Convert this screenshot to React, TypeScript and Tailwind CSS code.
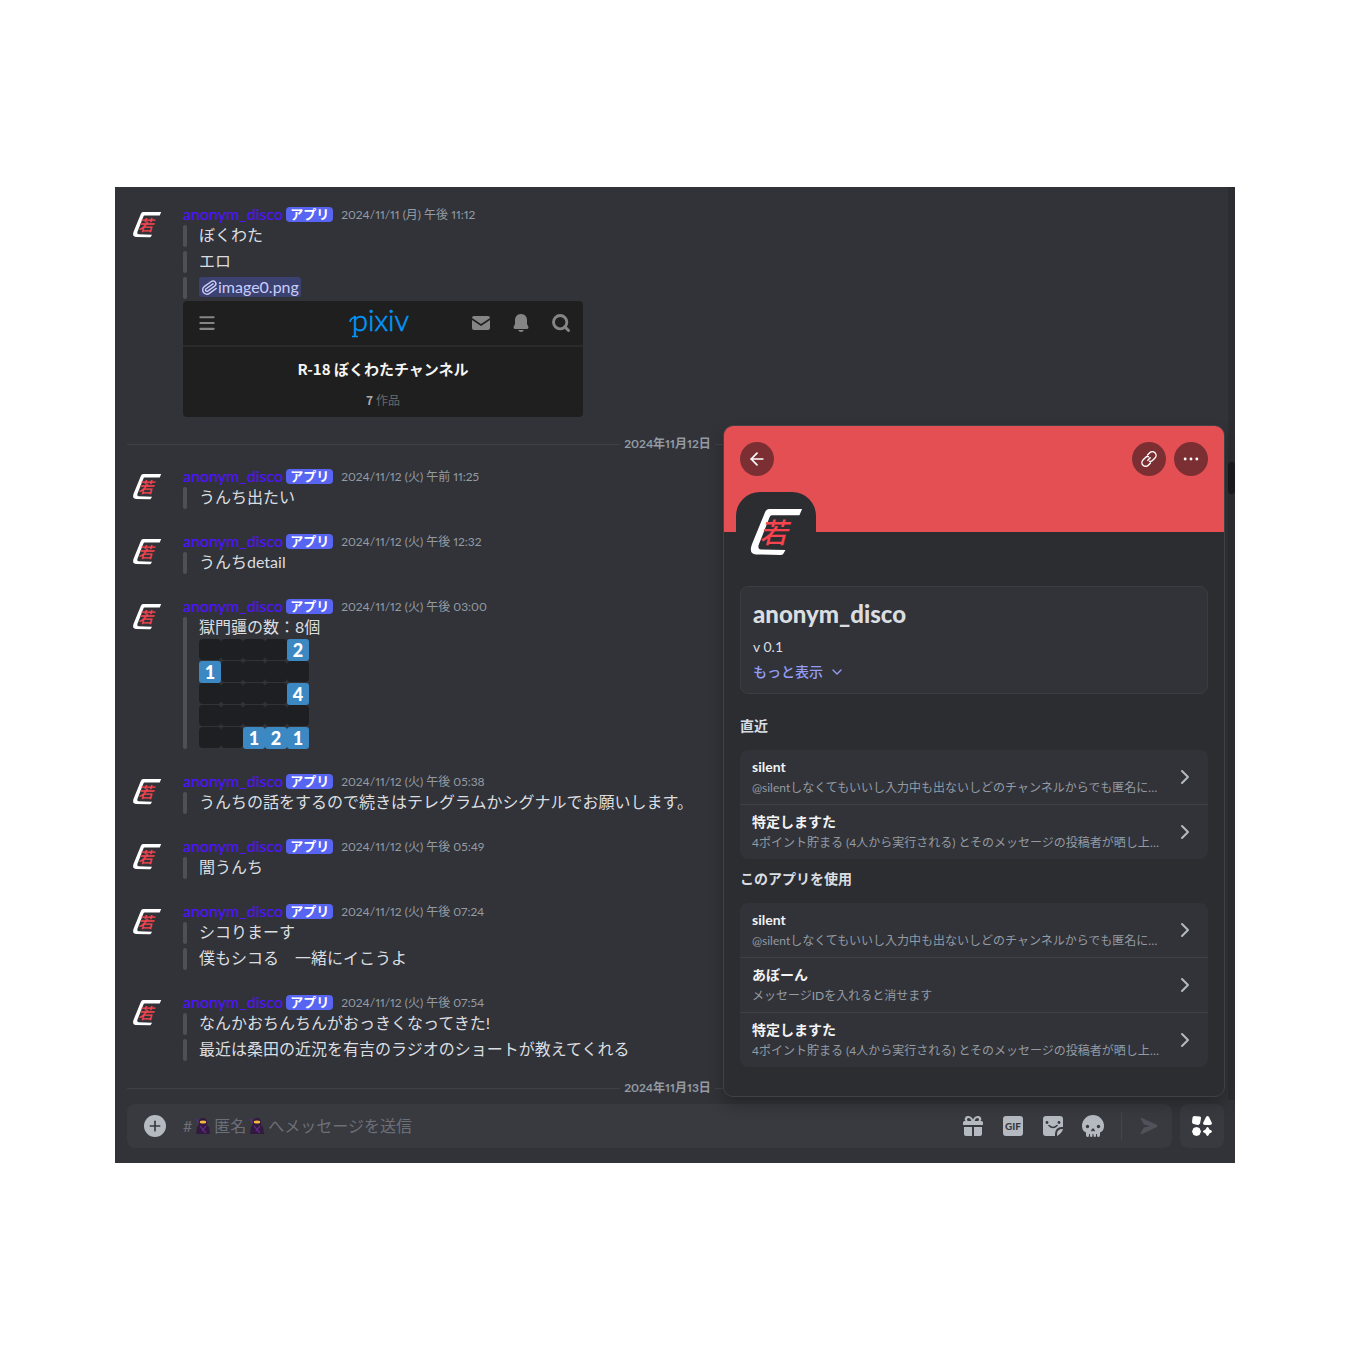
import { ReactNode, useState } from "react"
import { ArrowLeft, ChevronDown, ChevronRight, Ellipsis, Menu, Paperclip, Plus, Search } from "lucide-react"

type Message = {
  time: string
  blocks: ReactNode[]
  attachment?: ReactNode
}

type Command = {
  name: string
  description: string
}

const silent: Command = { name: "silent", description: "@silentしなくてもいいし入力中も出ないしどのチャンネルからでも匿名に…" }
const doxed: Command = { name: "特定しますた", description: "4ポイント貯まる (4人から実行される) とそのメッセージの投稿者が晒し上…" }
const abone: Command = { name: "あぼーん", description: "メッセージIDを入れると消せます" }

const board = ["....2", "1....", "....4", ".....", "..121"]

function Logo({ className }: { className: string }) {
  return (
    <svg viewBox="49 32 220 220" className={className} aria-hidden="true">
      <path
        d="M116 71 H215 L207 90 H124 Q119 90 117 96 L84 180 Q81 193 91 193 L165 195 L158 207 Q156 210 150 210 L76 208 Q58 207 61 188 Q62 181 66 172 L103 82 Q107 71 116 71Z"
        fill="#fff"
      />
      <text x="87" y="173" fontSize="84" fontWeight="500" fontStyle="italic" fill="#f7444e">若</text>
    </svg>
  )
}

function Ninja() {
  return (
    <svg viewBox="0 0 16 18" className="h-[18px] w-4" aria-hidden="true">
      <path d="M8 1 C5 1 4 3 4 6 C4 8 3 9 2 10 L1 17 H15 L14 10 C12 9 12 8 12 6 C12 3 11 1 8 1Z" fill="#31193f" />
      <path d="M5 4 Q8 3 11 4 V6 Q8 7 5 6Z" fill="#f5b73c" />
      <path d="M5 9 L11 16 M11 9 L7 14 M1 2 L4 6" stroke="#5b2c80" strokeWidth="1.3" fill="none" />
    </svg>
  )
}

function Board() {
  return (
    <div className="mt-0.5 -mb-0.5 grid w-fit auto-rows-[22px] grid-cols-5">
      {board.flatMap((row, y) =>
        row.split("").map((cell, x) =>
          cell === "." ? (
            <span key={`${x}-${y}`} className="h-[21px] w-[22px] rounded bg-[#1e1f22]" />
          ) : (
            <span
              key={`${x}-${y}`}
              className="h-[22px] w-[22px] rounded-[3px] bg-[#3b88c3] text-center text-lg leading-[22px] font-black text-white"
            >
              {cell}
            </span>
          )
        )
      )}
    </div>
  )
}

function PixivCard() {
  return (
    <div className="mt-0.5 w-[400px] max-w-full overflow-hidden rounded bg-[#1f1f1f]">
      <div className="grid h-[46px] grid-cols-3 items-center border-b-2 border-[#2a2a2a] pr-3 pl-3.5 text-[#858585]">
        <Menu size={20} strokeWidth={2.5} />
        <svg viewBox="0 -3 72 44" className="h-11 w-[72px] justify-self-center" role="img" aria-label="pixiv">
          <text x="4" y="27" fontSize="29" fontWeight="300" fill="#0096fa" stroke="#0096fa" strokeWidth="0.6" fontFamily="Lato, sans-serif">pixiv</text>
          <path d="M2 18 Q2 14 8 13 M4 32.500 H10" stroke="#0096fa" strokeWidth="1.6" fill="none" />
        </svg>
        <div className="flex gap-5 justify-self-end">
          <svg viewBox="0 0 20 20" className="size-5" fill="currentColor" aria-hidden="true">
            <path d="M3 3 H17 Q19 3 19 5 L10 11 L1 5 Q1 3 3 3Z" />
            <path d="M1 7 L10 13 L19 7 V15 Q19 17 17 17 H3 Q1 17 1 15Z" />
          </svg>
          <svg viewBox="0 0 20 20" className="size-5" fill="currentColor" aria-hidden="true">
            <path d="M10 1 C6 1 4 4 4 7 V11 L2.500 14 Q2.500 16 4 16 H16 Q17.500 16 17.500 14 L16 11 V7 C16 4 14 1 10 1Z" />
            <path d="M7 17 H13 Q12 19 10 19 Q8 19 7 17Z" />
          </svg>
          <Search size={20} strokeWidth={3.5} />
        </div>
      </div>
      <div className="flex h-[70px] flex-col items-center pt-3 font-['Noto_Sans_CJK_JP',sans-serif]">
        <p className="text-[15px] leading-5 font-bold text-[#f5f5f5]">R-18 ぼくわたチャンネル</p>
        <p className="mt-[11px] text-xs leading-5 text-[#6b6b6b]"><b className="text-[#adadad]">7</b> 作品</p>
      </div>
    </div>
  )
}

const firstDay: Message[] = [
  {
    time: "2024/11/11 (月) 午後 11:12",
    blocks: [
      "ぼくわた",
      "エロ",
      <a href="#image0" className="flex w-fit items-center rounded-[3px] bg-[#3c4270] px-0.5 text-[#c9cdfb]">
        <Paperclip size={17} className="rotate-[10deg]" />image0.png
      </a>
    ],
    attachment: <PixivCard />
  }
]

const secondDay: Message[] = [
  { time: "2024/11/12 (火) 午前 11:25", blocks: ["うんち出たい"] },
  { time: "2024/11/12 (火) 午後 12:32", blocks: ["うんちdetail"] },
  { time: "2024/11/12 (火) 午後 03:00", blocks: [<>獄門疆の数：8個<Board /></>] },
  { time: "2024/11/12 (火) 午後 05:38", blocks: ["うんちの話をするので続きはテレグラムかシグナルでお願いします。"] },
  { time: "2024/11/12 (火) 午後 05:49", blocks: ["闇うんち"] },
  { time: "2024/11/12 (火) 午後 07:24", blocks: ["シコりまーす", "僕もシコる　一緒にイこうよ"] },
  { time: "2024/11/12 (火) 午後 07:54", blocks: ["なんかおちんちんがおっきくなってきた!", "最近は桑田の近況を有吉のラジオのショートが教えてくれる"] }
]

function MessageList({ messages }: { messages: Message[] }) {
  return (
    <ol className="flex flex-col gap-[21px] px-4">
      {messages.map((message) => (
        <li key={message.time} className="flex gap-3">
          <Logo className="mt-0.5 size-10 shrink-0" />
          <div className="min-w-0 flex-1">
            <div className="flex h-[22px] items-center">
              <span className="text-base font-medium text-[#5012ff]">anonym_disco</span>
              <span className="ml-[3px] h-[15px] rounded bg-[#5865f2] px-1 text-[13px] leading-[15px] font-bold text-white">アプリ</span>
              <time className="ml-2 pt-0.5 text-xs text-[#949ba4] proportional-nums">{message.time}</time>
            </div>
            <div className="flex flex-col gap-1">
              {message.blocks.map((block, i) => (
                <blockquote key={i} className="flex gap-3">
                  <span className="w-1 shrink-0 rounded-sm bg-[#4e5058]" />
                  <div className="pb-0.5 leading-5">{block}</div>
                </blockquote>
              ))}
            </div>
            {message.attachment}
          </div>
        </li>
      ))}
    </ol>
  )
}

function DateDivider({ children }: { children: ReactNode }) {
  return (
    <div className="mt-5 mr-5 ml-3 flex h-3.5 items-center gap-1 text-xs font-bold text-[#949ba4] proportional-nums">
      <span className="h-px flex-1 bg-[#3f4147]" />
      {children}
      <span className="h-px flex-1 bg-[#3f4147]" />
    </div>
  )
}

function CommandList({ commands }: { commands: Command[] }) {
  return (
    <ul className="divide-y divide-[#3f4147] rounded-lg bg-[#313338]">
      {commands.map((command) => (
        <li key={command.name}>
          <button className="flex h-[54px] w-full items-center pr-[11px] pl-3 text-left">
            <span className="min-w-0 flex-1">
              <span className="block text-sm leading-5 font-bold text-[#f2f3f5]">{command.name}</span>
              <span className="block truncate text-xs leading-[21px] text-[#949ba4]">{command.description}</span>
            </span>
            <ChevronRight size={24} className="shrink-0 text-[#b5bac1]" />
          </button>
        </li>
      ))}
    </ul>
  )
}

function RoundButton({ label, children }: { label: string; children: ReactNode }) {
  return (
    <button aria-label={label} className="flex size-[34px] items-center justify-center rounded-full bg-[#7c2f33] text-white">
      {children}
    </button>
  )
}

function AppPanel() {
  return (
    <aside className="absolute right-2.5 bottom-[66px] w-[502px] overflow-hidden rounded-[10px] border border-[#3f4147] bg-[#2b2d31] shadow-[0_8px_16px_rgba(0,0,0,0.24)]">
      <div className="flex h-[106px] gap-2 bg-[#e34f53] p-4">
        <RoundButton label="戻る"><ArrowLeft size={20} /></RoundButton>
        <span className="flex-1" />
        <RoundButton label="リンクをコピー">
          <svg viewBox="0 0 18 18" className="size-[18px]" fill="none" stroke="currentColor" strokeWidth="1.4" strokeLinecap="round" aria-hidden="true">
            <path d="M7.500 5 L9.700 2.800 A3.300 3.300 0 0 1 15 8 L12.500 10.500 A3 3 0 0 1 9.500 11.300" />
            <path d="M10.500 13 L8.300 15.200 A3.300 3.300 0 0 1 3 10 L5.500 7.500 A3 3 0 0 1 8.500 6.700" />
            <path d="M7.800 10.200 L10.200 7.800" />
          </svg>
        </RoundButton>
        <RoundButton label="その他"><Ellipsis size={20} strokeWidth={1.5} /></RoundButton>
      </div>
      <div className="relative -mt-10 ml-3 h-20 w-20 rounded-3xl bg-[#2b2d31] pt-1 pl-[11px]">
        <Logo className="size-[73px]" />
      </div>
      <div className="px-4 pt-3.5 pb-[29px]">
        <div className="h-[108px] rounded-lg border border-[#3a3c42] bg-[#313338] px-3 pt-3">
          <h2 className="text-2xl leading-[30px] font-black text-[#dbdee1]">anonym_disco</h2>
          <p className="mt-2 text-sm leading-5 text-[#dbdee1]">v 0.1</p>
          <button className="mt-[5px] flex items-center gap-1.5 text-sm leading-5 font-medium text-[#949cf7]">
            もっと表示<ChevronDown size={16} />
          </button>
        </div>
        <h3 className="mt-[22px] mb-3.5 text-sm leading-5 font-bold text-[#dbdee1]">直近</h3>
        <CommandList commands={[silent, doxed]} />
        <h3 className="mt-2.5 mb-3.5 text-sm leading-5 font-bold text-[#dbdee1]">このアプリを使用</h3>
        <CommandList commands={[silent, abone, doxed]} />
      </div>
    </aside>
  )
}

function Composer() {
  const [draft, setDraft] = useState("")

  return (
    <form className="flex gap-2 pt-1 pr-[11px] pb-[15px] pl-3" onSubmit={(e) => e.preventDefault()}>
      <div className="flex h-11 min-w-0 flex-1 items-center rounded-lg bg-[#383a40] pr-3 pl-[17px] text-[#b5bac1]">
        <button type="button" aria-label="添付" className="flex size-[22px] items-center justify-center rounded-full bg-[#b5bac1] text-[#383a40]">
          <Plus size={16} strokeWidth={2.5} />
        </button>
        <div className="ml-[17px] grid min-w-0 flex-1 items-center">
          <label htmlFor="draft" className="col-start-1 row-start-1 flex items-center gap-[3px] whitespace-nowrap text-[#6d6f78]">
            {!draft && <>#<Ninja />匿名<Ninja />へメッセージを送信</>}
          </label>
          <input
            id="draft"
            value={draft}
            onChange={(e) => setDraft(e.target.value)}
            className="col-start-1 row-start-1 bg-transparent text-[#dbdee1] outline-none"
          />
        </div>
        <button type="button" aria-label="ギフト" className="flex w-10 justify-center">
          <svg viewBox="0 0 20 20" className="size-5" fill="currentColor" aria-hidden="true">
            <path fillRule="evenodd" d="M2.500 5 A3 3 0 0 1 5 0 C7.500 0 9 1.500 10 3.500 C11 1.500 12.500 0 15 0 A3 3 0 0 1 17.500 5 H18.500 Q20 5 20 6.500 V9 H0 V6.500 Q0 5 1.500 5Z M5.500 2 A1.500 1.500 0 0 0 5.500 5 H8.300 C7.800 3 7 2 5.500 2Z M14.500 2 C13 2 12.200 3 11.700 5 H14.500 A1.500 1.500 0 0 0 14.500 2Z" />
            <path d="M1 11 H9 V20 H3 Q1 20 1 18Z M11 11 H19 V18 Q19 20 17 20 H11Z" />
          </svg>
        </button>
        <button type="button" className="flex w-10 justify-center">
          <span className="flex size-5 items-center justify-center rounded-[3px] bg-[#b5bac1] text-[10px] font-black text-[#383a40]">GIF</span>
        </button>
        <button type="button" aria-label="スタンプ" className="flex w-10 justify-center">
          <svg viewBox="0 0 20 20" className="size-5" aria-hidden="true">
            <path d="M3 0 H17 Q20 0 20 3 V11 H18 Q12 12 12 18 V20 H3 Q0 20 0 17 V3 Q0 0 3 0Z" fill="currentColor" />
            <path d="M14 20 V18 Q14 13 20 13 Q19 17 14 20Z" fill="currentColor" />
            <path d="M6 9.500 Q10 13.500 14 9.500" stroke="#383a40" strokeWidth="1.6" strokeLinecap="round" fill="none" />
            <circle cx="4" cy="6.500" r="1.400" fill="#383a40" />
            <circle cx="16" cy="6.500" r="1.400" fill="#383a40" />
          </svg>
        </button>
        <button type="button" aria-label="絵文字" className="flex w-10 justify-center">
          <svg viewBox="0 0 22 22" className="size-[22px]" aria-hidden="true">
            <path d="M11 0 A11 11 0 0 1 22 11 Q22 16 18 17.500 V20 Q18 22 16.500 22 Q15 22 15 20.500 V19 H14 V20.500 Q14 22 12.800 22 Q11.500 22 11.500 20.500 V19 H10.500 V20.500 Q10.500 22 9.200 22 Q8 22 8 20.500 V19 H7 V20.500 Q7 22 5.500 22 Q4 22 4 20 V17.500 Q0 16 0 11 A11 11 0 0 1 11 0Z" fill="currentColor" />
            <circle cx="5.500" cy="11.500" r="1.700" fill="#383a40" />
            <circle cx="16.500" cy="11.500" r="1.700" fill="#383a40" />
            <path d="M11 13 Q13 15 13 16 Q12 17 11 15.500 Q10 17 9 16 Q9 15 11 13Z" fill="#383a40" />
          </svg>
        </button>
        <span className="mx-2 h-7 w-px bg-[#44464d]" />
        <button aria-label="送信" className="ml-2 flex w-[22px] justify-center">
          <svg viewBox="0 0 18 18" className="size-[18px]" fill="#50525a" aria-hidden="true">
            <path d="M2 1 L17 8 Q18 9 17 10 L2 17 Q0 18 1 15.500 L4 10.500 L10 9 L4 7.500 L1 2.500 Q0 0 2 1Z" />
          </svg>
        </button>
      </div>
      <button type="button" aria-label="アプリ" className="flex size-11 items-center justify-center rounded-lg bg-[#383a40]">
        <svg viewBox="0 0 20 20" className="size-5" fill="#fff" aria-hidden="true">
          <path d="M2 0 L8 0.500 Q9.500 1 9 2.500 L8 7.500 Q7 9 5.500 9 L1.500 8 Q0 7.500 0 6 L0.500 1.500 Q1 0 2 0Z" />
          <path d="M14 1 Q15.500 -1 17 1 L19.700 6.500 Q20.500 9 18 9 H13 Q10.500 9 11.300 6.500Z" />
          <path d="M4.500 11 L7.500 12 L9 15.500 L7.500 19 L4.500 20 L1.500 19 L0 15.500 L1.500 12Z" />
          <path d="M14.500 11.700 Q15.500 10.300 16.500 11.700 L17.500 13.500 L19.300 14.500 Q20.700 15.500 19.300 16.500 L17.500 17.500 L16.500 19.300 Q15.500 20.700 14.500 19.300 L13.500 17.500 L11.700 16.500 Q10.300 15.500 11.700 14.500 L13.500 13.500Z" />
        </svg>
      </button>
    </form>
  )
}

export default function App() {
  return (
    <div className="min-h-screen bg-white px-[115px] py-[187px] font-['Lato','Noto_Sans_CJK_JP',sans-serif] text-base text-[#dbdee1]" lang="ja">
      <main className="relative bg-[#313338]">
        <div className="flex">
          <div className="min-w-0 flex-1 pt-4 pb-[5px]">
            <MessageList messages={firstDay} />
            <DateDivider>2024年11月12日</DateDivider>
            <div className="h-3.5" />
            <MessageList messages={secondDay} />
            <DateDivider>2024年11月13日</DateDivider>
          </div>
          <div className="w-[7px] bg-[#2b2d31] pt-[275px]">
            <div className="h-8 rounded-full bg-[#1a1b1e]" />
          </div>
        </div>
        <Composer />
        <AppPanel />
      </main>
    </div>
  )
}
